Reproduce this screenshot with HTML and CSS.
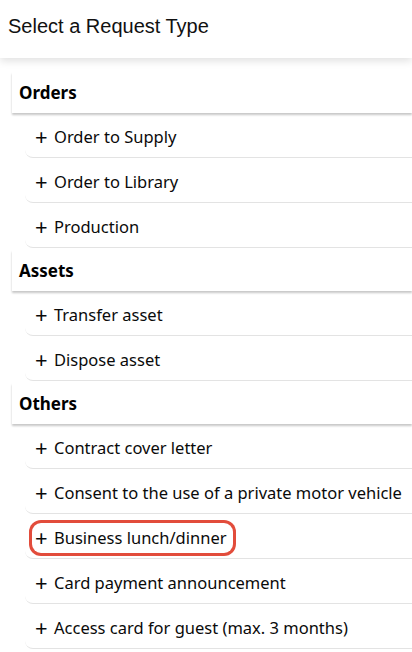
FILE: index.html
```html
<!DOCTYPE html>
<html>
<head>
<meta charset="utf-8">
<link rel="stylesheet" href="styles.css">
</head>
<body>
<header class="top">Select a Request Type</header>
<main class="list">
  <section class="group">
    <h2 class="group-title">Orders</h2>
    <div class="item"><span class="plus">+</span>Order to Supply</div>
    <div class="item"><span class="plus">+</span>Order to Library</div>
    <div class="item"><span class="plus">+</span>Production</div>
  </section>
  <section class="group">
    <h2 class="group-title">Assets</h2>
    <div class="item"><span class="plus">+</span>Transfer asset</div>
    <div class="item"><span class="plus">+</span>Dispose asset</div>
  </section>
  <section class="group">
    <h2 class="group-title">Others</h2>
    <div class="item"><span class="plus">+</span>Contract cover letter</div>
    <div class="item"><span class="plus">+</span>Consent to the use of a private motor vehicle</div>
    <div class="item"><span class="highlight"><span class="plus">+</span>Business lunch/dinner</span></div>
    <div class="item"><span class="plus">+</span>Card payment announcement</div>
    <div class="item"><span class="plus">+</span>Access card for guest (max. 3 months)</div>
  </section>
</main>
</body>
</html>
```
FILE: styles.css
```css
html, body {
  margin: 0;
  padding: 0;
  background: #fff;
}
body {
  width: 412px;
  height: 652px;
  overflow: hidden;
  color: #000;
  font-family: "Noto Sans", "Open Sans", sans-serif;
}
.top {
  position: relative;
  z-index: 2;
  height: 58px;
  box-sizing: border-box;
  padding: 14px 0 0 8px;
  font-family: "Liberation Sans", Arial, sans-serif;
  font-size: 20px;
  line-height: 24px;
  color: #111;
  background: #fff;
  box-shadow: 0 3px 8px rgba(0, 0, 0, 0.12);
}
.list {
  padding-top: 14px;
}
.group {
  display: flex;
  flex-direction: column;
}
.group + .group {
  margin-top: 2px;
}
.group-title {
  margin: 0 0 0 12px;
  height: 41px;
  box-sizing: border-box;
  padding: 10px 0 0 7px;
  font-size: 17px;
  font-weight: 700;
  line-height: 22px;
  background: #fff;
  box-shadow: 0 2px 2px rgba(0, 0, 0, 0.22);
  position: relative;
  z-index: 1;
}
.item {
  margin-left: 25px;
  height: 45px;
  box-sizing: border-box;
  padding: 13px 0 0 10px;
  font-size: 16.5px;
  line-height: 22px;
  color: #0a0a0a;
  white-space: nowrap;
  border-bottom: 1px solid #e3e3e3;
  border-bottom-left-radius: 8px;
}
.plus {
  display: inline-block;
  width: 19px;
  font-size: 22px;
  line-height: 0;
  vertical-align: -2px;
}
.highlight {
  display: inline-block;
  border-radius: 9px;
  box-shadow: 0 0 0 3px #e24c3b;
  padding: 4px 6px 4px 3px;
  margin: -4px 0 0 -3px;
}
```
